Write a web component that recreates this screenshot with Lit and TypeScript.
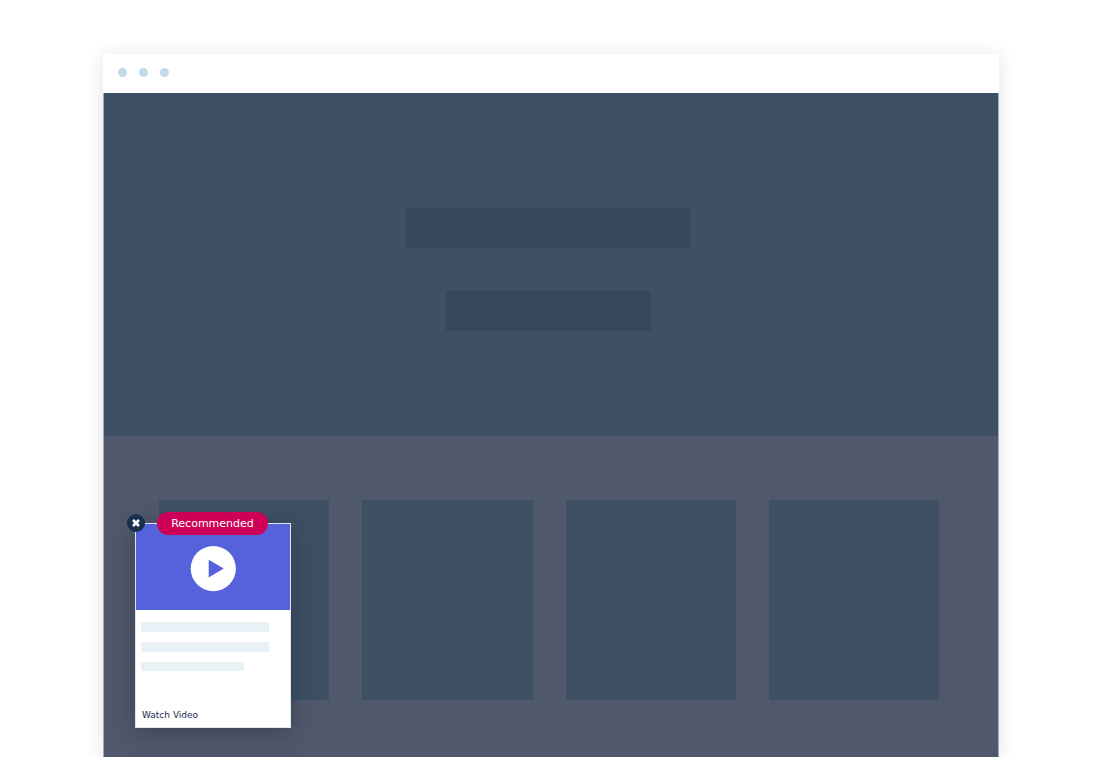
import { LitElement, html, css } from "lit";
import { customElement } from "lit/decorators.js";

@customElement("video-popup")
class VideoPopup extends LitElement {
  static styles = css`
    :host {
      display: block;
      font-family: "DejaVu Sans", "Noto Sans", sans-serif;
    }
    .card {
      position: relative;
      box-sizing: border-box;
      display: flex;
      flex-direction: column;
      width: 156px;
      height: 205px;
      border: 1px solid #e3e6f2;
      background: #fff;
      box-shadow: 0 4px 22px rgba(24, 38, 54, 0.42);
    }
    .media {
      display: flex;
      align-items: center;
      justify-content: center;
      height: 86px;
      padding-top: 4px;
      box-sizing: border-box;
      background: #5661dc;
    }
    button {
      display: block;
      margin: 0;
      padding: 0;
      border: 0;
      background: none;
      cursor: pointer;
    }
    svg {
      display: block;
    }
    .close {
      position: absolute;
      left: -9px;
      top: -10px;
    }
    .badge {
      position: absolute;
      left: 21px;
      top: -12px;
      width: 111px;
      height: 23px;
      border-radius: 12px;
      background: #cf0058;
      color: #fff;
      font-size: 11px;
      line-height: 23px;
      text-align: center;
    }
    .lines {
      display: flex;
      flex-direction: column;
      gap: 10px;
      padding: 12px 21px 0 5px;
    }
    .line {
      height: 10px;
      background: #e8f1f6;
    }
    .line.short {
      width: 103px;
      height: 9px;
    }
    .link {
      margin: auto 6px 5px;
      color: #20294d;
      font-size: 9px;
      line-height: 14px;
      text-decoration: none;
    }
  `;

  render() {
    return html`
      <article class="card">
        <div class="media">
          <button class="play" aria-label="Play video">
            <svg width="46" height="46" viewBox="0 0 46 46">
              <circle cx="23.3" cy="22.6" r="22.6" fill="#fff" />
              <path d="M18.7 13.8L33.7 22.6L18.7 31.4Z" fill="#5661dc" />
            </svg>
          </button>
        </div>
        <div class="lines">
          <div class="line"></div>
          <div class="line"></div>
          <div class="line short"></div>
        </div>
        <a class="link" href="#video">Watch Video</a>
        <span class="badge">Recommended</span>
        <button class="close" aria-label="Close">
          <svg width="18" height="18" viewBox="0 0 18 18">
            <circle cx="9" cy="9" r="9" fill="#19304d" />
            <path d="M6 6L12 12M12 6L6 12" stroke="#fff" stroke-width="2.6" />
          </svg>
        </button>
      </article>
    `;
  }
}

@customElement("app-root")
class AppRoot extends LitElement {
  static styles = css`
    :host {
      display: flex;
      flex-direction: column;
      box-sizing: border-box;
      min-height: 100vh;
      padding: 54px 101px 0 103px;
      background: #fff;
    }
    .window {
      flex: 1;
      display: flex;
      flex-direction: column;
      border-radius: 3px 3px 0 0;
      background: #fff;
      box-shadow: 0 2px 18px rgba(40, 40, 90, 0.13);
    }
    .bar {
      display: flex;
      align-items: center;
      gap: 12px;
      height: 39px;
      box-sizing: border-box;
      padding: 0 15px 2px;
    }
    .dot {
      width: 9px;
      height: 9px;
      border-radius: 50%;
      background: #c3dae8;
    }
    .page {
      flex: 1;
      display: flex;
      flex-direction: column;
      border: solid #a4aab8;
      border-width: 0 1px;
    }
    .hero {
      display: flex;
      flex-direction: column;
      align-items: center;
      gap: 43px;
      padding: 115px 6px 105px 0;
      background: #3f4f65;
    }
    .block {
      width: 284px;
      height: 40px;
      background: #37475d;
    }
    .block.small {
      width: 205px;
    }
    .content {
      flex: 1;
      position: relative;
      padding: 64px 59px 57px 55px;
      background: #50596b;
    }
    .grid {
      display: grid;
      grid-template-columns: repeat(4, 1fr);
      gap: 33px;
    }
    .tile {
      height: 200px;
      background: #3f4f64;
    }
    .popup {
      position: absolute;
      left: 31px;
      bottom: 29px;
    }
  `;

  render() {
    return html`
      <main class="window">
        <header class="bar">
          ${[0, 1, 2].map(() => html`<span class="dot"></span>`)}
        </header>
        <div class="page">
          <section class="hero">
            <div class="block"></div>
            <div class="block small"></div>
          </section>
          <section class="content">
            <div class="grid">
              ${[0, 1, 2, 3].map(() => html`<div class="tile"></div>`)}
            </div>
            <video-popup class="popup"></video-popup>
          </section>
        </div>
      </main>
    `;
  }
}
